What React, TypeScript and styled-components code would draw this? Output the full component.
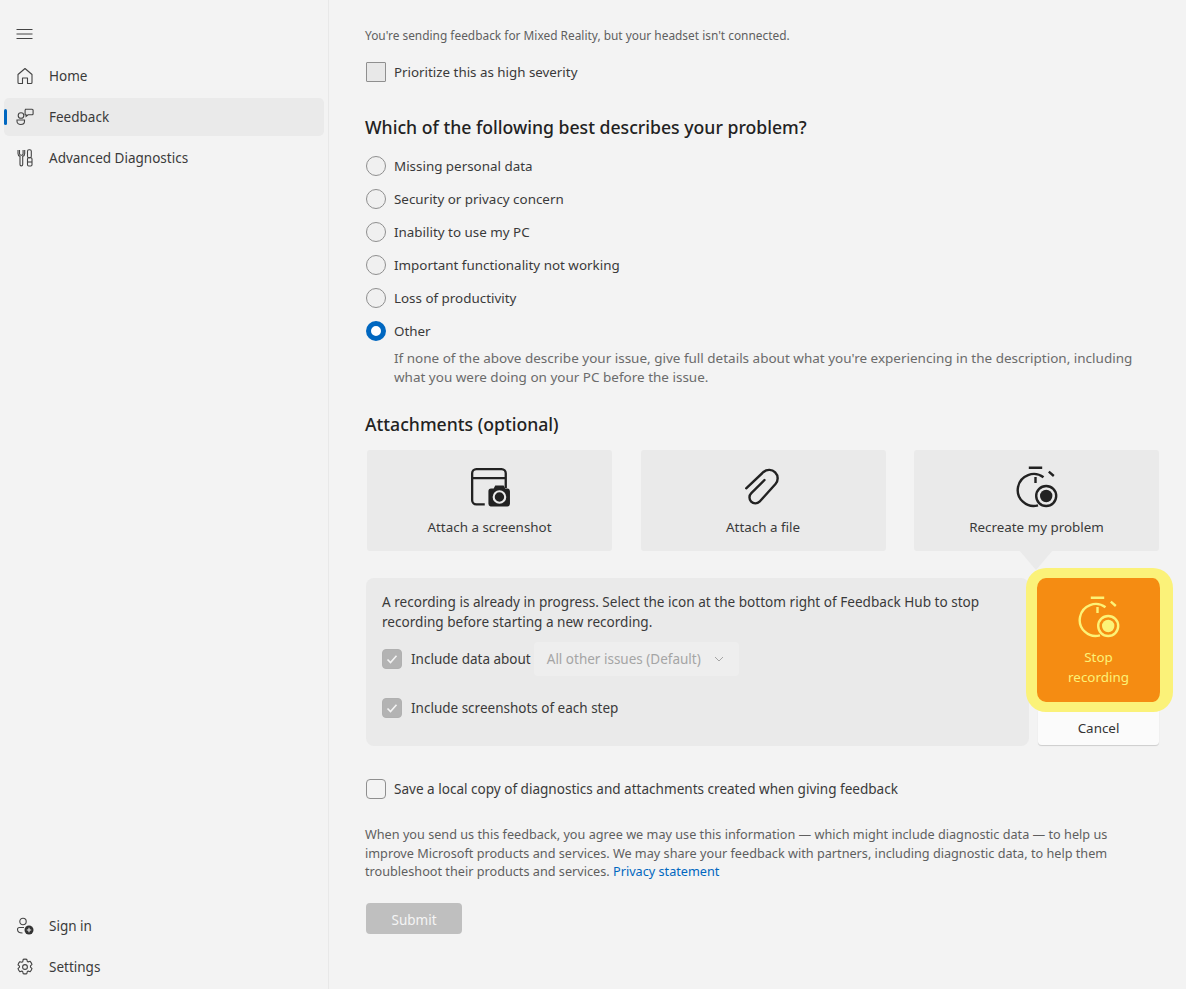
import * as React from 'react';
import styled, { createGlobalStyle } from 'styled-components';

const GlobalStyle = createGlobalStyle`
    html, body {
        margin: 0;
        padding: 0;
        background: #f3f3f3;
    }
    * {
        box-sizing: border-box;
    }
    body {
        font-family: 'Noto Sans', 'Open Sans', sans-serif;
        color: #333;
    }
`;

const Page = styled.div`
    display: grid;
    grid-template-columns: 329px 1fr;
    width: 1186px;
    height: 989px;
    overflow: hidden;
    background: #f3f3f3;
`;

const Sidebar = styled.nav`
    display: flex;
    flex-direction: column;
    justify-content: space-between;
    border-right: 1px solid #e8e8e8;
    padding: 15px 4px 3px 4px;
`;
const NavGroup = styled.div`
    display: flex;
    flex-direction: column;
    gap: 3px;
`;
const Hamburger = styled.div`
    height: 38px;
    padding-left: 12px;
    margin-bottom: 1px;
    display: flex;
    align-items: center;
    color: #444;
`;
const NavItem = styled.div<{ $active?: boolean }>`
    position: relative;
    display: flex;
    align-items: center;
    gap: 15px;
    height: 38px;
    width: 320px;
    padding-left: 12px;
    font-size: 13.5px;
    color: #3a3a3a;
    border-radius: 5px;
    background: ${props => props.$active ? '#eaeaea' : 'transparent'};
    &::before {
        content: '';
        display: ${props => props.$active ? 'block' : 'none'};
        position: absolute;
        left: 0;
        top: 11px;
        width: 3px;
        height: 16px;
        border-radius: 2px;
        background: #0067c0;
    }
`;

const Main = styled.main`
    padding: 27px 26px 0 36px;
    display: flex;
    flex-direction: column;
`;
const Notice = styled.p`
    margin: 0;
    height: 16px;
    line-height: 16px;
    font-size: 11.9px;
    color: #5f5f5f;
`;
const CheckRow = styled.label<{ $top?: number; $size?: number }>`
    display: flex;
    align-items: center;
    gap: 8px;
    height: 20px;
    margin-top: ${props => props.$top ?? 0}px;
    font-size: ${props => props.$size ?? 13.5}px;
    color: #3a3a3a;
    white-space: nowrap;
`;
const Box = styled.span<{ $variant: 'square' | 'empty' | 'checked' }>`
    flex: none;
    width: 20px;
    height: 20px;
    margin-left: 1px;
    display: flex;
    align-items: center;
    justify-content: center;
    border-radius: ${props => props.$variant === 'square' ? '1px' : '4px'};
    border: 1px solid ${props => props.$variant === 'checked' ? '#b0b0b0' : '#8f8f8f'};
    background: ${props => props.$variant === 'square' ? '#e8e8e8' : props.$variant === 'checked' ? '#b3b3b3' : '#f3f3f3'};
    color: #f4f4f4;
`;
const Heading = styled.h2<{ $top: number }>`
    margin: ${props => props.$top}px 0 0;
    font-size: 17.65px;
    line-height: 24px;
    font-weight: 500;
    color: #222;
    white-space: nowrap;
`;
const RadioList = styled.div`
    display: flex;
    flex-direction: column;
    gap: 13px;
    margin-top: 17px;
`;
const RadioRow = styled.div`
    display: flex;
    align-items: center;
    gap: 8px;
    height: 20px;
    font-size: 13.4px;
    color: #3a3a3a;
`;
const Radio = styled.span<{ $on?: boolean }>`
    flex: none;
    width: 20px;
    height: 20px;
    margin-left: 1px;
    border-radius: 50%;
    background: ${props => props.$on ? '#fff' : '#f0f0f0'};
    border: ${props => props.$on ? '5px solid #0067c0' : '1px solid #8f8f8f'};
`;
const RadioHint = styled.p`
    margin: 8px 0 0 29px;
    font-size: 13.49px;
    line-height: 19px;
    color: #6b6b6b;
    white-space: nowrap;
`;
const Cards = styled.div`
    display: grid;
    grid-template-columns: repeat(3, 245px);
    justify-content: space-between;
    width: 792px;
    margin: 14px 0 0 2px;
`;
const Card = styled.div`
    position: relative;
    height: 101px;
    border-radius: 3px;
    background: #eaeaea;
    display: flex;
    flex-direction: column;
    align-items: center;
    padding-top: 16px;
    font-size: 13.4px;
    color: #3a3a3a;
`;
const CardIcon = styled.div`
    height: 42px;
    color: #222;
    margin-bottom: 10px;
`;
const Pointer = styled.span`
    position: absolute;
    left: 105px;
    top: 100px;
    width: 0;
    height: 0;
    border-left: 17px solid transparent;
    border-right: 17px solid transparent;
    border-top: 20px solid #eaeaea;
`;
const RecordRow = styled.div`
    display: flex;
    margin-top: 27px;
    gap: 8px;
`;
const RecordPanel = styled.div`
    width: 663px;
    height: 168px;
    margin-left: 1px;
    padding: 14px 16px;
    border-radius: 8px;
    background: #eaeaea;
    font-size: 13.59px;
    color: #3a3a3a;
`;
const PanelText = styled.p`
    margin: 0 0 18px;
    line-height: 19.5px;
    white-space: nowrap;
`;
const PanelCheck = styled(CheckRow)`
    gap: 9px;
    font-size: 13.5px;
    & > span:first-child {
        margin-left: 0;
    }
`;
const Select = styled.div`
    display: flex;
    align-items: center;
    gap: 13px;
    width: 205px;
    height: 34px;
    margin-left: -6px;
    padding-left: 13px;
    border-radius: 4px;
    background: #eeeeee;
    color: #a5a5a5;
`;
const RecordSide = styled.div`
    display: flex;
    flex-direction: column;
    width: 123px;
`;
const StopButton = styled.div`
    position: relative;
    height: 124px;
    border-radius: 3px;
    background: #f58c12;
    color: #fcf277;
    display: flex;
    flex-direction: column;
    align-items: center;
    padding-top: 18px;
    font-size: 13.4px;
    line-height: 19.5px;
    text-align: center;
    &::after {
        content: '';
        position: absolute;
        inset: -10px -13px -10px -11px;
        border: 10px solid #fbf279;
        border-left-width: 11px;
        border-right-width: 13px;
        border-radius: 20px;
    }
`;
const StopIcon = styled.div`
    height: 42px;
    margin-bottom: 10px;
`;
const CancelButton = styled.div`
    width: 121px;
    height: 35px;
    margin: 9px 0 0 1px;
    border-radius: 0 0 4px 4px;
    background: #fbfbfb;
    border-bottom: 1px solid #d0d0d0;
    box-shadow: 0 0 1px rgba(0, 0, 0, 0.12);
    display: flex;
    align-items: center;
    justify-content: center;
    font-size: 13.4px;
    color: #333;
`;
const Legal = styled.p`
    margin: 26px 0 0;
    width: 790px;
    font-size: 12.68px;
    line-height: 18.5px;
    color: #5f5f5f;
    white-space: nowrap;
`;
const PrivacyLink = styled.a`
    color: #0067c0;
`;
const Submit = styled.div`
    width: 96px;
    height: 31px;
    margin: 22px 0 0 1px;
    padding-top: 3px;
    border-radius: 4px;
    background: #bfbfbf;
    color: #f5f5f5;
    display: flex;
    align-items: center;
    justify-content: center;
    font-size: 13.5px;
`;

const MenuIcon = () => (
    <svg width="17" height="12" viewBox="0 0 17 12" fill="none" stroke="currentColor" strokeWidth="1">
        <path d="M.5 1.5h16M.5 6h16M.5 10.5h16" />
    </svg>
);
const HomeIcon = () => (
    <svg width="18" height="18" viewBox="0 0 18 18" fill="none" stroke="#444" strokeWidth="1.1">
        <path d="M2 7.5 9 1.5l7 6v8a1 1 0 0 1-1 1h-3.5v-5.5h-5v5.5H3a1 1 0 0 1-1-1z" strokeLinejoin="round" />
    </svg>
);
const FeedbackIcon = () => (
    <svg width="18" height="18" viewBox="0 0 18 18" fill="none" stroke="#444" strokeWidth="1.1">
        <circle cx="5" cy="7.5" r="2.8" />
        <path d="M1 12h7.5v1.2c0 2-1.8 3.3-3.8 3.3S1 15.2 1 13.2z" />
        <path d="M9.5 1h7a1 1 0 0 1 1 1v3.5a1 1 0 0 1-1 1h-4l-2 1.6V6.5h-1V2a1 1 0 0 1 1-1z" transform="translate(-.4 .2)" />
    </svg>
);
const DiagnosticsIcon = () => (
    <svg width="18" height="18" viewBox="-1 0 18 18" fill="none" stroke="#444" strokeWidth="1.1">
        <path d="M2.5 1v3.5a1.8 1.8 0 0 0 3.6 0V1M1 1v3.5c0 1.6.9 2.6 2 3v8a1.4 1.4 0 0 0 1.3 1.4 1.4 1.4 0 0 0 1.4-1.4v-8c1.200-.4 2-1.400 2-3V1" />
        <rect x="10.500" y=".8" width="3.800" height="8" rx="1.500" />
        <rect x="10.500" y="8.800" width="4.500" height="8.200" rx="1.200" />
        <path d="M10.500 13h4.500" />
    </svg>
);
const SignInIcon = () => (
    <svg width="18" height="18" viewBox="0 0 18 18" fill="none" stroke="#444" strokeWidth="1.1">
        <circle cx="7" cy="4.500" r="3.200" />
        <path d="M8 10.500H3.500A2 2 0 0 0 1.500 12.500c0 2 2 3.500 5 3.500" />
        <circle cx="13" cy="13" r="4.500" fill="#333" stroke="none" />
        <path d="M13 10.800v4.400M10.800 13h4.400" stroke="#f3f3f3" />
    </svg>
);
const GearIcon = () => (
    <svg width="18" height="18" viewBox="0 0 18 18" fill="none" stroke="#444" strokeWidth="1.1" strokeLinejoin="round">
        <path d="M7.200 1.400c1.200-.3 2.400-.3 3.600 0l.5 2 .9.500 2-.6c.8.900 1.400 1.900 1.800 3.100l-1.500 1.400v1.400l1.500 1.400c-.4 1.200-1 2.200-1.800 3.100l-2-.6-.9.500-.5 2c-1.200.3-2.400.3-3.600 0l-.5-2-.9-.5-2 .6c-.8-.9-1.400-1.900-1.800-3.100l1.500-1.400V8.200L2 6.800c.4-1.200 1-2.200 1.800-3.100l2 .6.900-.5z" />
        <circle cx="9" cy="9" r="2.400" />
    </svg>
);
const CheckMark = () => (
    <svg width="12" height="12" viewBox="0 0 12 12" fill="none" stroke="currentColor" strokeWidth="1.600">
        <path d="M1.500 6.500 4.500 9.500 10.500 2.800" />
    </svg>
);
const Chevron = () => (
    <svg width="10" height="10" viewBox="0 0 10 10" fill="none" stroke="#a5a5a5" strokeWidth="1">
        <path d="M1 3l4 4 4-4" />
    </svg>
);
const ScreenshotIcon = () => (
    <svg width="42" height="42" viewBox="0 0 40 40" fill="none">
        <path d="M15 36.500H7a4 4 0 0 1-4-4V7a4 4 0 0 1 4-4h24a4 4 0 0 1 4 4v14M3 11.500h32" stroke="currentColor" strokeWidth="2.200" />
        <path d="M19 23.500a2.500 2.500 0 0 1 2.500-2.500H24l1.500-3h8l1.500 3h2a2.500 2.500 0 0 1 2.500 2.500v12a2.500 2.500 0 0 1-2.500 2.500h-16A2.500 2.500 0 0 1 19 35.500z" fill="currentColor" transform="translate(-.5 .5)" />
        <circle cx="29" cy="29.500" r="5.500" fill="none" stroke="#eaeaea" strokeWidth="2" />
        <circle cx="29" cy="29.500" r="3.500" fill="currentColor" />
    </svg>
);
const ClipIcon = () => (
    <svg width="40" height="40" viewBox="0 0 40 40" fill="none" stroke="currentColor" strokeWidth="2.400" strokeLinecap="round">
        <path d="M3.200 22.300 20.500 6a8.500 8.500 0 0 1 12 12L16.500 35.700A5.800 5.800 0 0 1 8.300 27.200L21.500 14" />
    </svg>
);
const TimerIcon = () => (
    <svg width="42" height="42" viewBox="0 0 42 42" fill="none" stroke="currentColor" strokeWidth="2.400">
        <path d="M12.800 1.700h13.400M19.500 11v6M32.800 5.700l5 4.300" />
        <path d="M27.500 11.300A16 16 0 1 0 22 39.400" />
        <circle cx="30.200" cy="30" r="10" />
        <circle cx="30.200" cy="30" r="6.200" fill="currentColor" stroke="none" />
    </svg>
);

const problems = [
    'Missing personal data',
    'Security or privacy concern',
    'Inability to use my PC',
    'Important functionality not working',
    'Loss of productivity',
];

const App = () => {
    return (
        <Page>
            <GlobalStyle />
            <Sidebar>
                <NavGroup>
                    <Hamburger><MenuIcon /></Hamburger>
                    <NavItem><HomeIcon />Home</NavItem>
                    <NavItem $active><FeedbackIcon />Feedback</NavItem>
                    <NavItem><DiagnosticsIcon />Advanced Diagnostics</NavItem>
                </NavGroup>
                <NavGroup>
                    <NavItem><SignInIcon />Sign in</NavItem>
                    <NavItem><GearIcon />Settings</NavItem>
                </NavGroup>
            </Sidebar>
            <Main>
                <Notice>You're sending feedback for Mixed Reality, but your headset isn't connected.</Notice>
                <CheckRow $top={19} $size={13.35}><Box $variant="square" />Prioritize this as high severity</CheckRow>
                <Heading $top={33}>Which of the following best describes your problem?</Heading>
                <RadioList>
                    {problems.map(p => <RadioRow key={p}><Radio />{p}</RadioRow>)}
                    <RadioRow><Radio $on />Other</RadioRow>
                </RadioList>
                <RadioHint>
                    If none of the above describe your issue, give full details about what you're experiencing in the description, including
                    <br />what you were doing on your PC before the issue.
                </RadioHint>
                <Heading $top={25}>Attachments (optional)</Heading>
                <Cards>
                    <Card><CardIcon><ScreenshotIcon /></CardIcon>Attach a screenshot</Card>
                    <Card><CardIcon><ClipIcon /></CardIcon>Attach a file</Card>
                    <Card><CardIcon><TimerIcon /></CardIcon>Recreate my problem<Pointer /></Card>
                </Cards>
                <RecordRow>
                    <RecordPanel>
                        <PanelText>
                            A recording is already in progress. Select the icon at the bottom right of Feedback Hub to stop
                            <br />recording before starting a new recording.
                        </PanelText>
                        <PanelCheck>
                            <Box $variant="checked"><CheckMark /></Box>Include data about
                            <Select>All other issues (Default)<Chevron /></Select>
                        </PanelCheck>
                        <PanelCheck $top={29}>
                            <Box $variant="checked"><CheckMark /></Box>Include screenshots of each step
                        </PanelCheck>
                    </RecordPanel>
                    <RecordSide>
                        <StopButton>
                            <StopIcon><TimerIcon /></StopIcon>
                            Stop<br />recording
                        </StopButton>
                        <CancelButton>Cancel</CancelButton>
                    </RecordSide>
                </RecordRow>
                <CheckRow $top={33} $size={13.55}><Box $variant="empty" />Save a local copy of diagnostics and attachments created when giving feedback</CheckRow>
                <Legal>
                    When you send us this feedback, you agree we may use this information — which might include diagnostic data — to help us
                    <br />improve Microsoft products and services. We may share your feedback with partners, including diagnostic data, to help them
                    <br />troubleshoot their products and services. <PrivacyLink>Privacy statement</PrivacyLink>
                </Legal>
                <Submit>Submit</Submit>
            </Main>
        </Page>
    );
};

export default App;
